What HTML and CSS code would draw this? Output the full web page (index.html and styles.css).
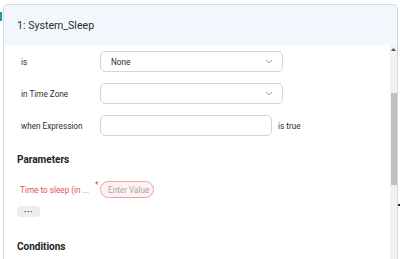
FILE: index.html
```html
<!DOCTYPE html>
<html lang="en">
<head>
    <meta charset="UTF-8">
    <meta name="viewport" content="width=device-width, initial-scale=1.0">
    <title>System_Sleep</title>
    <link rel="stylesheet" href="styles.css">
</head>
<body>
    <!-- trozo del botón que queda detrás del modal -->
    <div class="behind-tab"></div>
    <div class="edge-mark"></div>

    <div class="modal">
        <div class="modal-header">1: System_Sleep</div>
        <div class="modal-main">
            <div class="modal-content">
                <div class="field-row">
                    <span class="field-label">is</span>
                    <div class="select-box">
                        <span>None</span>
                        <svg class="chevron" width="8" height="5" viewBox="0 0 8 5"><path d="M1 1l3 3 3-3" fill="none" stroke="#9a9a9a" stroke-width="0.9"/></svg>
                    </div>
                </div>
                <div class="field-row">
                    <span class="field-label">in Time Zone</span>
                    <div class="select-box">
                        <span></span>
                        <svg class="chevron" width="8" height="5" viewBox="0 0 8 5"><path d="M1 1l3 3 3-3" fill="none" stroke="#9a9a9a" stroke-width="0.9"/></svg>
                    </div>
                </div>
                <div class="field-row">
                    <span class="field-label">when Expression</span>
                    <div class="text-box"></div>
                    <span class="suffix">is true</span>
                </div>

                <h3 class="section-title">Parameters</h3>
                <div class="param-row">
                    <span class="param-label">Time to sleep (in ...</span>
                    <span class="required">*</span>
                    <span class="value-pill">Enter Value</span>
                </div>
                <button class="more-button">&middot;&middot;&middot;</button>

                <h3 class="section-title conditions">Conditions</h3>
            </div>
            <div class="scrollbar">
                <svg class="scroll-arrow" width="5" height="3" viewBox="0 0 5 3"><path d="M0 3L2.5 0 5 3z" fill="#555"/></svg>
                <div class="scroll-thumb"></div>
            </div>
        </div>
    </div>
</body>
</html>
```

FILE: styles.css
```css
* {
    box-sizing: border-box;
}
body {
    margin: 0;
    background-color: #ffffff;
    font-family: Roboto, "Liberation Sans", Arial, sans-serif;
    color: #333;
    width: 400px;
    height: 259px;
    overflow: hidden;
    position: relative;
}
.behind-tab {
    position: absolute;
    left: 0;
    top: 12px;
    width: 2px;
    height: 9px;
    background-color: #1a9aa8;
}
.edge-mark {
    position: absolute;
    left: 398px;
    top: 204px;
    width: 2px;
    height: 2px;
    background-color: #222;
}
.modal {
    margin: 4px 0 0 3px;
    width: 395px;
    height: 255px;
    border: 1px solid #d4d8df;
    border-bottom: none;
    border-radius: 5px 5px 0 0;
    display: flex;
    flex-direction: column;
    overflow: hidden;
    background-color: #fff;
}
.modal-header {
    height: 40px;
    flex-shrink: 0;
    background-color: #f3f7fd;
    display: flex;
    align-items: center;
    padding-left: 13px;
    padding-top: 1px;
    font-size: 10.6px;
    color: #2b2b2b;
}
.modal-main {
    display: flex;
    flex: 1;
    min-height: 0;
}
.modal-content {
    flex: 1;
    padding: 6px 0 0 17px;
}
.field-row {
    display: flex;
    align-items: center;
    height: 21px;
    margin-bottom: 11px;
    font-size: 8.2px;
    color: #2e2e2e;
}
.field-label {
    width: 79px;
    flex-shrink: 0;
}
.select-box {
    width: 183px;
    height: 21px;
    border: 1px solid #d5d5d5;
    border-radius: 5px;
    display: flex;
    align-items: center;
    justify-content: space-between;
    padding: 0 9px 0 10px;
}
.chevron {
    display: block;
}
.text-box {
    width: 172px;
    height: 21px;
    border: 1px solid #d5d5d5;
    border-radius: 5px;
}
.suffix {
    margin-left: 6px;
}
.section-title {
    margin: 17px 0 0 -4px;
    font-size: 10px;
    font-weight: bold;
    line-height: 14px;
    color: #222;
}
.param-row {
    display: flex;
    align-items: center;
    height: 17px;
    margin-top: 14px;
    margin-left: -1px;
    font-size: 8.2px;
}
.param-label {
    width: 75px;
    color: #df4f5a;
    white-space: nowrap;
}
.required {
    color: #df4f5a;
    width: 5px;
    align-self: flex-start;
    margin-top: -1px;
}
.value-pill {
    height: 17px;
    width: 54px;
    border: 1px solid #eea0a4;
    background-color: #fdf1f1;
    border-radius: 9px;
    color: #a9a9a9;
    display: flex;
    align-items: center;
    padding-left: 7px;
    white-space: nowrap;
}
.more-button {
    display: block;
    margin: 8px 0 0 -4px;
    width: 23px;
    height: 11px;
    padding: 0;
    border: none;
    border-radius: 4px;
    background-color: #ededed;
    color: #222;
    font-size: 8px;
    font-weight: bold;
    line-height: 11px;
    letter-spacing: 0.6px;
    font-family: inherit;
}
.section-title.conditions {
    margin-top: 23px;
}
.scrollbar {
    width: 7px;
    background-color: #f1f1f1;
    display: flex;
    flex-direction: column;
    align-items: center;
}
.scroll-arrow {
    margin-top: 3px;
}
.scroll-thumb {
    width: 6px;
    height: 92px;
    margin-top: 42px;
    background-color: #c1c1c1;
}
```
